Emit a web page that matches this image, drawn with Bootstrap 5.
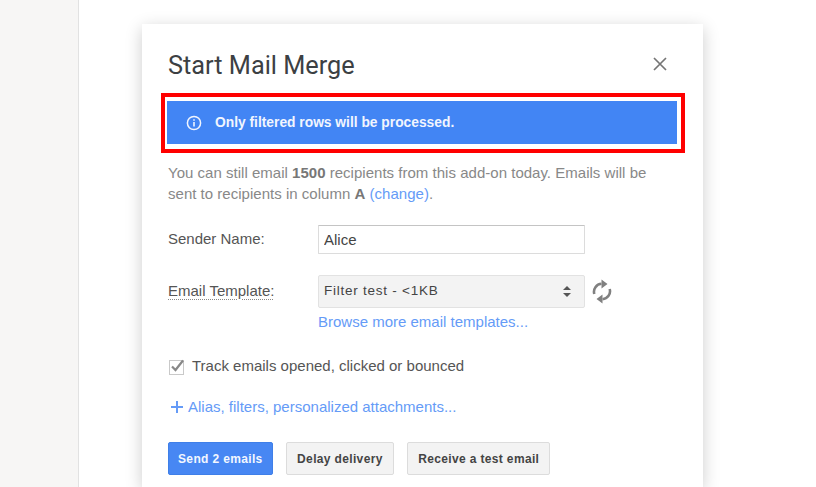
<!DOCTYPE html>
<html lang="en">
<head>
  <meta charset="UTF-8">
  <meta name="viewport" content="width=device-width, initial-scale=1">
  <title>Start Mail Merge</title>
  <link href="https://cdn.jsdelivr.net/npm/bootstrap@5.3.0/dist/css/bootstrap.min.css" rel="stylesheet">
  <style>
    html, body { height: 100%; }
    body {
      background: #fff;
      font-family: "Liberation Sans", Arial, sans-serif;
      font-size: 15px;
      color: #555;
      overflow: hidden;
    }
    .side-strip { width: 79px; background: #f7f6f5; border-right: 1px solid #e2e2e2; flex: none; }
    .merge-dialog {
      width: 561px;
      margin: 24px 0 0 63px;
      padding: 0 26px;
      background: #fff;
      box-shadow: 0 4px 16px rgba(0,0,0,.2);
      flex: none;
    }
    .dialog-head { height: 69px; padding-top: 23px; }
    .dialog-title { font-family: Roboto, sans-serif; font-size: 25.3px; font-weight: 400; line-height: 38px; color: #3c4043; margin: 0; }
    .close-x { background: none; border: 0; padding: 0; width: 14px; height: 14px; margin: 10px 10px 0 0; line-height: 0; }
    .red-frame { margin: 0 -8px 0 -7px; padding: 4px 4px 5px 2px; border: 4px solid #f00; }
    .info-banner {
      height: 43px;
      padding-left: 19px;
      background: #4285f4;
      color: #f1f5fe;
      font-size: 13.8px;
      font-weight: 700;
      gap: 13px;
    }
    .banner-text { padding-top: 1px; }
    .intro-text { color: #888; line-height: 21px; margin: 9px 0 0; letter-spacing: .02px; }
    .intro-text b { color: #777; }
    .blue-link { color: #659bf7; text-decoration: none; }
    .form-line { display: flex; align-items: center; }
    .form-line label { width: 150px; flex: none; margin: 0; }
    .name-line { margin-top: 21px; }
    .template-line { margin-top: 21px; }
    .dotted-label { text-decoration: underline dotted #888 1px; text-underline-offset: 3px; }
    .sender-input.form-control {
      width: 267px; height: 29px; padding: 0 5px;
      font-size: 15px; color: #444;
      border: 1px solid #dcdcdc; border-top-color: #c4c4c4; border-radius: 1px;
    }
    .template-select.form-select {
      width: 267px; height: 33px; padding: 0 5px;
      font-size: 13.5px; letter-spacing: .75px; color: #444;
      border: 1px solid #e2e2e2; border-radius: 2px;
      background-color: #f3f3f3;
      background-image: url("data:image/svg+xml,%3Csvg xmlns='http://www.w3.org/2000/svg' width='10' height='13'%3E%3Cpath d='M1 5l4-4 4 4zM1 8h8l-4 4z' fill='%23555'/%3E%3C/svg%3E");
      background-position: right 12px center;
      background-size: 10px 13px;
    }
    .reload-icon { margin-left: 7px; line-height: 0; }
    .browse-link { margin: 6px 0 0 150px; line-height: 16px; }
    .track-line { margin-top: 26px; gap: 7px; line-height: 20px; }
    .alias-line { margin-top: 21px; margin-left: 3px; line-height: 20px; gap: 5px; }
    .action-row { margin-top: 25px; gap: 13.5px; }
    .mm-btn.btn {
      height: 33px; padding: 0 10px;
      font-size: 12px; font-weight: 700;
      border-radius: 2px;
      background: #f3f3f3; border: 1px solid #dcdcdc; color: #444;
      letter-spacing: .35px;
    }
    .mm-btn.btn.send-btn { padding: 0 9px; background: #4787f3; border-color: #3f7fe8; color: #f3f7ff; }
  </style>
</head>
<body class="d-flex">

  <div class="side-strip"></div>

  <div class="merge-dialog">
    <div class="dialog-head d-flex justify-content-between align-items-start">
      <h1 class="dialog-title">Start Mail Merge</h1>
      <button class="close-x" type="button" aria-label="Close">
        <svg width="14" height="14" viewBox="0 0 14 14"><path d="M1 1l12 12M13 1L1 13" stroke="#757575" stroke-width="1.7" fill="none"/></svg>
      </button>
    </div>

    <div class="red-frame">
      <div class="info-banner d-flex align-items-center">
        <svg width="16" height="16" viewBox="0 0 16 16"><circle cx="8" cy="8" r="6.600" fill="none" stroke="#f1f5fe" stroke-width="1.500"/><path d="M7.200 7h1.600v4.600H7.200zM7.200 4.200h1.600v1.600H7.200z" fill="#f1f5fe"/></svg>
        <span class="banner-text">Only filtered rows will be processed.</span>
      </div>
    </div>

    <p class="intro-text">You can still email <b>1500</b> recipients from this add-on today. Emails will be sent to recipients in column <b>A</b> <a class="blue-link" href="#">(change)</a>.</p>

    <div class="form-line name-line">
      <label for="senderName">Sender Name:</label>
      <input id="senderName" class="form-control sender-input" type="text" value="Alice">
    </div>

    <div class="form-line template-line">
      <label for="template"><span class="dotted-label">Email Template:</span></label>
      <select id="template" class="form-select template-select"><option>Filter test - &lt;1KB</option></select>
      <span class="reload-icon">
        <svg width="20" height="25" viewBox="0 0 20 25"><g fill="none" stroke="#808080" stroke-width="2.600"><path d="M2.300 15A8 8 0 0 1 9.500 4.800"/><path d="M17.700 10A8 8 0 0 1 10.500 20.200"/></g><path d="M9.500 .5L15.500 5l-6 4.500zM10.500 15.500L4.500 20l6 4.500z" fill="#808080"/></svg>
      </span>
    </div>
    <div class="browse-link"><a class="blue-link" href="#">Browse more email templates...</a></div>

    <div class="track-line d-flex align-items-center">
      <svg width="17" height="17" viewBox="0 0 17 17"><rect x="1.500" y="2.500" width="14" height="14" fill="#fff" stroke="#c9c9c9"/><path d="M4 8.500l3.500 3.500L15 2.500" fill="none" stroke="#888" stroke-width="2.200"/></svg>
      <span>Track emails opened, clicked or bounced</span>
    </div>

    <div class="alias-line d-flex align-items-center">
      <svg width="12" height="12" viewBox="0 0 12 12"><path d="M6 0v12M0 6h12" stroke="#659bf7" stroke-width="2"/></svg>
      <a class="blue-link" href="#">Alias, filters, personalized attachments...</a>
    </div>

    <div class="action-row d-flex">
      <button class="btn mm-btn send-btn" type="button">Send 2 emails</button>
      <button class="btn mm-btn" type="button">Delay delivery</button>
      <button class="btn mm-btn" type="button">Receive a test email</button>
    </div>
  </div>

  <script src="https://cdn.jsdelivr.net/npm/bootstrap@5.3.0/dist/js/bootstrap.bundle.min.js"></script>
</body>
</html>
